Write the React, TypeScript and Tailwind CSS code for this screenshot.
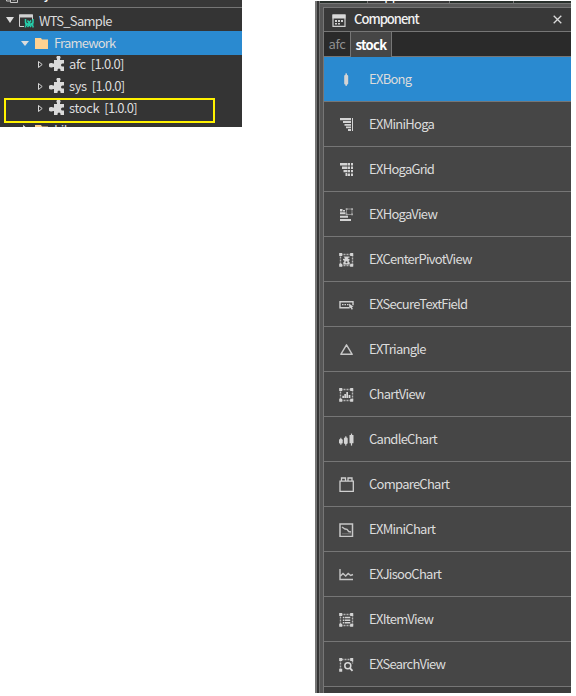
import type { ReactNode } from "react";

const FONT = "font-['Noto_Sans_CJK_KR','Noto_Sans',sans-serif]";

function Icon({ children, className = "" }: { children: ReactNode; className?: string }) {
  return (
    <svg viewBox="0 0 16 16" className={`h-4 w-4 shrink-0 ${className}`} fill="#d4d4d4" stroke="none">
      {children}
    </svg>
  );
}

/** Dashed container outline with square handles on its corners. */
function Frame() {
  return (
    <>
      <rect x="2.5" y="3.5" width="12" height="11" fill="none" stroke="#b4b4b4" strokeWidth="1.4" strokeDasharray="2 1" />
      <path d="M1.200 2h3v3h-3zM12.200 2h3v3h-3zM1.200 12.700h3v3h-3zM12.200 12.700h3v3h-3z" />
    </>
  );
}

const components: { name: string; icon: ReactNode }[] = [
  {
    name: "EXBong",
    icon: (
      <>
        <rect x="6.2" y="4" width="4" height="9.4" rx="1" />
        <rect x="7.4" y="2.4" width="1.6" height="12.4" />
      </>
    ),
  },
  {
    name: "EXMiniHoga",
    icon: <path d="M2 2h11v2.200H2zM5 5h8v2H5zM6.500 8H13v1.800H6.500zM8 10.500h5V12.300H8zM10 13h3v2h-3zM14 2h1v13h-1z" />,
  },
  {
    name: "EXHogaGrid",
    icon: (
      <>
        <path d="M2 2h7v2.500H2zM4 5.500h5V8H4zM5.500 9H9v2.300H5.500zM7.500 12H9v3H7.500z" />
        <path d="M9.500 2h2.500v2.500H9.500zM13 2h2v2.500h-2zM9.500 5.500H12V8H9.500zM13 5.500h2V8h-2zM9.500 9H12v2.300H9.500zM13 9h2v2.300h-2zM9.500 12.500H12V15H9.500zM13 12.500h2V15h-2z" />
      </>
    ),
  },
  {
    name: "EXHogaView",
    icon: (
      <>
        <path d="M2 3h2.500v2.500H2zM5 4h2v1.500H5zM2 6.300h5.500v2H2zM2 9.800h8v2H2zM2 13h11v2H2z" />
        <rect x="8.500" y="3" width="5.500" height="5.500" fill="none" stroke="#8c8c8c" />
        <path d="M7.700 2.200h1.800V4H7.700zM13.200 2.200H15V4h-1.800zM7.700 7.500h1.800v1.800H7.700zM13.200 7.500H15v1.800h-1.800z" fill="#aaa" />
      </>
    ),
  },
  {
    name: "EXCenterPivotView",
    icon: (
      <>
        <Frame />
        <path d="M5.500 5.500h6V7h-2l2 1v1.500L10.500 10l1.200 1.500v2H5.300v-2L6.500 10 5 9V7.500h2z" />
        <circle cx="8.500" cy="11.200" r="1" fill="#464646" />
        <path d="M5 7.200h1.500M10.300 7.200H12" stroke="#464646" />
      </>
    ),
  },
  {
    name: "EXSecureTextField",
    icon: (
      <>
        <path d="M11 11.700H2v-6h13v3.500" fill="none" stroke="#d0d0d0" strokeWidth="1.400" />
        <path d="M4 8h1.500v1.300H4zM6.500 8H8v1.300H6.500zM9 8h1.500v1.300H9z" />
        <path d="m11 7.500 4.500 3.200-1.600.3 1 2-1.200.7-1.100-2-1.300 1z" />
      </>
    ),
  },
  {
    name: "EXTriangle",
    icon: <path d="M8.500 3.800 14.200 13.300H2.800z" fill="none" stroke="#c8c8c8" strokeWidth="1.400" strokeLinejoin="round" />,
  },
  {
    name: "ChartView",
    icon: (
      <>
        <Frame />
        <path d="M4.300 9.700H6V12H4.300zM6.300 8H8v4H6.300zM8.300 6H10v6H8.300zM10.600 9h1.800v3h-1.800z" />
      </>
    ),
  },
  {
    name: "CandleChart",
    icon: (
      <>
        <rect x="1" y="8" width="3.700" height="4.600" rx="1.200" />
        <rect x="2.300" y="6.800" width="1.100" height="7" />
        <rect x="5.900" y="6.500" width="3.800" height="6.500" rx="1.200" />
        <rect x="7.200" y="5.300" width="1.200" height="9.300" />
        <rect x="11.500" y="4" width="4" height="8.300" rx=".5" />
        <rect x="12.900" y="2.600" width="1.200" height="12" />
      </>
    ),
  },
  {
    name: "CompareChart",
    icon: <path d="M2 5.200h13.300v10.200H2zM3.500 5V2h4v3M10 5V2h4v3" fill="none" stroke="#d0d0d0" strokeWidth="1.300" />,
  },
  {
    name: "EXMiniChart",
    icon: (
      <>
        <rect x="2" y="3" width="12.500" height="12.500" fill="none" stroke="#c8c8c8" strokeWidth="1.500" />
        <path d="M4 6 7 8l2 .3 1.700 2.200 2.300.5" fill="none" stroke="#c4c4c4" strokeWidth="1.400" />
        <path d="M4 12.800h9" stroke="#777" />
      </>
    ),
  },
  {
    name: "EXJisooChart",
    icon: <path d="M2 3v10.500h13M2.500 10l2.500-2.500L7.700 10l2.500-2.500 2.500 2L15 8.500" fill="none" stroke="#c6c6c6" strokeWidth="1.400" />,
  },
  {
    name: "EXItemView",
    icon: (
      <>
        <Frame />
        <path d="M4.800 5.800h1.400v1.500H4.800zM6.800 5.800h5.500v1.500H6.800zM4.800 8.400h1.400v1.500H4.800zM6.800 8.400h5.500v1.500H6.800zM4.800 11h1.400v1.500H4.800zM6.800 11h5.500v1.500H6.800z" />
      </>
    ),
  },
  {
    name: "EXSearchView",
    icon: (
      <>
        <path d="M2.500 14.500v-11h12V8" fill="none" stroke="#b4b4b4" strokeWidth="1.400" strokeDasharray="2 1" />
        <path d="M1.200 2h3v3h-3zM12.200 2h3v3h-3zM1.200 12.700h3v3h-3z" />
        <circle cx="9.800" cy="9.800" r="3" fill="none" stroke="#dadada" strokeWidth="1.500" />
        <path d="m11.700 11.900 2.800 3" stroke="#dadada" strokeWidth="1.800" />
      </>
    ),
  },
];

/** Calendar-like window: title bar, side borders and a grid of cells. */
function WindowIcon({ className = "" }: { className?: string }) {
  return (
    <svg viewBox="0 0 14 13" className={`h-[13px] w-[14px] shrink-0 ${className}`}>
      <path d="M1 1h12v11.300H1z" fill="none" stroke="#cfcfcf" strokeWidth="1.200" />
      <path d="M.500.500h13v4H.500z" fill="#d8d8d8" />
      <path d="M3 6h2v2H3zM6 6h2v2H6zM9 6h2v2H9zM3 9h2v1.500H3zM6 9h2v1.500H6z" fill="#d0d0d0" />
    </svg>
  );
}

function PuzzleIcon() {
  return (
    <svg viewBox="0 0 16 16" className="ml-[5px] h-4 w-4 shrink-0" fill="#dadada">
      <path d="M5 4h3V2.800a2 2 0 1 1 3 0V4h4v3.500h-1.500a1.500 1.500 0 0 0 0 3H15V15h-3.500v-1a1.500 1.500 0 0 0-3 0v1H5v-4H3.500v.5H2A2 2 0 0 1 2 7h1.500v.500H5z" />
    </svg>
  );
}

function LibraryRow({ name }: { name: string }) {
  return (
    <div className="flex h-[22px] items-center pl-[37px]">
      <svg viewBox="0 0 7 9" className="h-[9px] w-[7px]">
        <path d="M1.500 1.500v6l3.700-3z" fill="none" stroke="#d6d6d6" />
      </svg>
      <PuzzleIcon />
      <span className="ml-1 tracking-[-0.4px]">{name}</span>
      <span className="ml-[5px] tracking-[-0.7px]">[1.0.0]</span>
    </div>
  );
}

function Folder() {
  return (
    <svg viewBox="0 0 13 11" className="h-[11px] w-[13px] shrink-0" fill="#ffd291">
      <path d="M0 0h6l1 1.500h6V11H0z" />
    </svg>
  );
}

function ProjectTree() {
  return (
    <div className="relative h-[127px] w-[242px] shrink-0 overflow-hidden bg-[#343434] text-[#dcdcdc]">
      <div className="flex h-2 items-end overflow-hidden border-b border-[#767676] bg-[#383838]">
        <svg viewBox="0 0 13 12" className="mb-1 ml-[5px] h-3 w-[13px] shrink-0" fill="none" stroke="#c8c8c8">
          <path d="M1.500 1v9H5M5.500 4.500h7v7h-7zM7.500 9h3" />
        </svg>
        <span className="mb-[4px] ml-[7px] text-[13px] leading-[19px] font-medium tracking-[-0.5px] text-white">Project</span>
      </div>
      <div className="flex h-[23px] items-center pl-[6px]">
        <svg viewBox="0 0 8 6" className="h-[6px] w-2" fill="#dcdcdc"><path d="M0 0h8L4 6z" /></svg>
        <svg viewBox="0 0 15 14" className="mt-[2px] ml-[5px] h-[14px] w-[15px]">
          <path d="M5 12.500H.5V1h13v5" fill="none" stroke="#d0d0d0" />
          <path d="M0 .5h14V3.500H0z" fill="#d0d0d0" />
          <path d="M6.500 5v3.500l2 1.500M14 5v3.500L12 10M6.500 13.500V12l2-1.500M14 13.500V12l-2-1.500M8.500 6.500 10.200 9 12 6.500M8.500 13l1.700-2.500L12 13M6 10h8.500" fill="none" stroke="#26cfab" strokeWidth="1.500" />
        </svg>
        <span className="mt-[2px] ml-[5px] tracking-[-0.7px]">WTS_Sample</span>
      </div>
      <div className="flex h-6 items-center bg-[#2a8ad0] pl-[21px]">
        <svg viewBox="0 0 8 5" className="h-[5px] w-2" fill="#dcdcdc"><path d="M0 0h8L4 5z" /></svg>
        <span className="ml-[6px]"><Folder /></span>
        <span className="ml-[6px] tracking-[-0.8px]">Framework</span>
      </div>
      <div className="-mt-[2px]">
        <LibraryRow name="afc" />
        <LibraryRow name="sys" />
        <LibraryRow name="stock" />
        <div className="flex h-[22px] items-center pl-[22px]">
          <svg viewBox="0 0 7 9" className="mb-[2px] h-[9px] w-[7px]"><path d="M1.500.500v7l3.700-3.500z" fill="none" stroke="#d6d6d6" /></svg>
          <span className="ml-[6px]"><Folder /></span>
          <span className="ml-[6px] tracking-[-0.4px]">Library</span>
        </div>
      </div>
      <div className="absolute top-[98px] left-1 h-[25px] w-[211px] border-2 border-[#fff200]" />
    </div>
  );
}

function ComponentPanel() {
  return (
    <div className="mt-px flex h-[692px] w-[256px] shrink-0 overflow-hidden bg-[#464646] text-[#dcdcdc]">
      <div className="w-[2px] bg-[#757575]" />
      <div className="w-[2px] bg-[#353535]" />
      <div className="w-px bg-[#707070]" />
      <div className="flex w-[251px] flex-col">
        <div className="flex h-[2px] shrink-0 overflow-hidden bg-[#29302c]">
          <div className="w-[48px] shrink-0 border-r border-[#767676]" />
          <div className="flex w-[82px] shrink-0 items-end border-r border-[#767676] bg-[#383838] pl-[9px]">
            <span className="-mb-[2px] text-[13px] leading-[19px] tracking-[-0.6px] text-white">Appli</span>
          </div>
          <div className="w-[64px] shrink-0 border-r border-[#767676]" />
        </div>
        <div className="h-1 shrink-0 border-t border-[#767676] bg-[#595959]" />
        <div className="flex grow">
          <div className="w-[3px] shrink-0 bg-[#565656]" />
          <div className="flex w-[248px] flex-col border-t border-l border-[#767676]">
            <div className="flex h-[23px] shrink-0 items-center bg-[#383838]">
              <WindowIcon className="mt-px ml-[8px]" />
              <span className="-mt-[2px] ml-[8px] text-[13px] font-medium tracking-[-1px] text-[#f0f0f0]">Component</span>
              <svg viewBox="0 0 9 9" className="mr-[9px] ml-auto h-[9px] w-[9px]" stroke="#dadada" strokeWidth="1.300">
                <path d="m.7.700 7.600 7.600M8.300.700.700 8.300" />
              </svg>
            </div>
            <div className="flex h-[26px] shrink-0 border-t border-[#767676] bg-[#2a2a2a]">
              <div className="flex h-[25px] w-[26px] items-center justify-center border-b border-[#767676] tracking-[-0.3px] text-[#8f8f8f]">afc</div>
              <div className="flex h-[25px] w-[42px] items-center justify-center border-x border-[#767676] bg-[#464646] font-bold tracking-[-0.6px] text-white">stock</div>
              <div className="h-[25px] grow border-b border-[#767676]" />
            </div>
            {components.map(({ name, icon }, i) => (
              <div
                key={name}
                className={`flex h-[45px] shrink-0 items-center border-b border-[#767676] pl-[14px] ${i === 0 ? "bg-[#2a8ad0]" : "bg-[#464646]"}`}
              >
                <Icon>{icon}</Icon>
                <span className="ml-[15px] tracking-[-0.73px]">{name}</span>
              </div>
            ))}
            <div className="grow bg-[#3d3d3d]" />
          </div>
        </div>
      </div>
    </div>
  );
}

export default function App() {
  return (
    <main className={`flex h-[696px] w-[576px] items-start overflow-hidden bg-white text-[13px] leading-[20px] ${FONT}`}>
      <ProjectTree />
      <div className="w-[73px] shrink-0" />
      <ComponentPanel />
    </main>
  );
}
